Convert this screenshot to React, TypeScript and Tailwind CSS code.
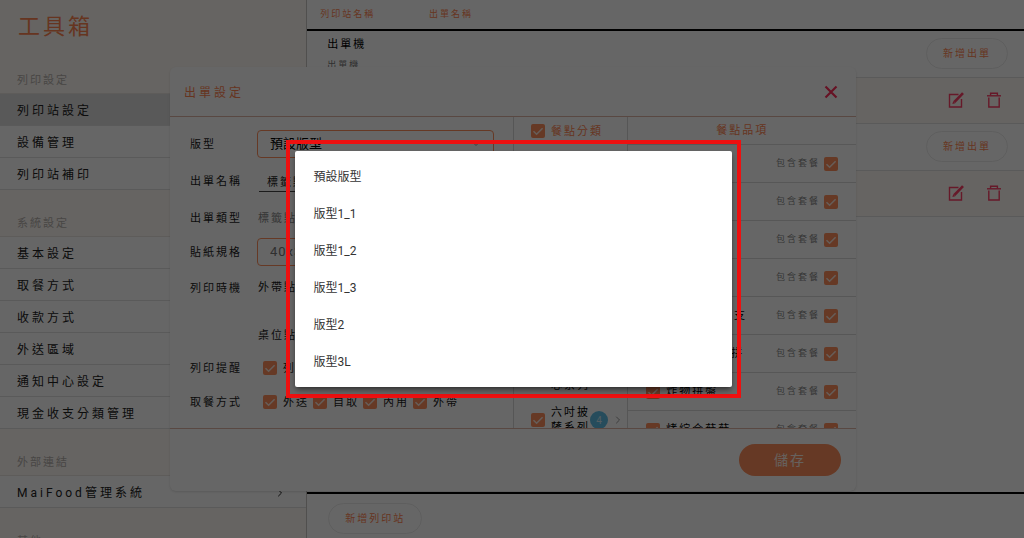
import { useState } from 'react';
import type { ReactNode } from 'react';
import { ChevronDown, ChevronRight } from 'lucide-react';

type NavGroup = { title: string; items: string[]; external?: boolean };

const navGroups: NavGroup[] = [
  { title: '列印設定', items: ['列印站設定', '設備管理', '列印站補印'] },
  { title: '系統設定', items: ['基本設定', '取餐方式', '收款方式', '外送區域', '通知中心設定', '現金收支分類管理'] },
  { title: '外部連結', items: ['MaiFood管理系統'], external: true },
  { title: '其他', items: [] },
];

const stations = [
  { name: '出單機', device: '出單機', ticket: '出單機' },
  { name: '標籤機', device: '標籤機', ticket: '標籤點單機' },
];

const layouts = ['預設版型', '版型1_1', '版型1_2', '版型1_3', '版型2', '版型3L'];

const categories = ['主餐系列', '套餐系列', '飲料系列', '湯品系列', '甜點系列', '炸物點心系列', '六吋披薩系列'];

const dishes = ['美式薯條', '黃金雞塊', '洋蔥圈', '起司條', '美式雞翅x1支', '經典炸物雙拼', '炸物拼盤', '烤綜合菇菇'];

function Checkbox({ label }: { label?: string }) {
  return (
    <span className="relative block size-3.5 shrink-0">
      <input type="checkbox" defaultChecked aria-label={label} className="block size-3.5 appearance-none rounded-xs bg-[#ff8f5c]" />
      <svg viewBox="0 0 14 14" className="pointer-events-none absolute inset-0 size-3.5" fill="none" stroke="#ffe9dc" strokeWidth="1.6">
        <path d="M2.5 7.2 5.6 10.2 11.6 4.2" />
      </svg>
    </span>
  );
}

function EditIcon() {
  return (
    <svg viewBox="0 0 16 16" className="size-4" fill="none" stroke="currentColor">
      <path d="M10.5 2.5H1.5V15H13.5V7" strokeWidth="1.4" />
      <path d="M6.4 10 15 1.2" strokeWidth="2.6" />
      <path d="M4.4 12 5.2 9 7.4 11.2Z" fill="currentColor" stroke="none" />
    </svg>
  );
}

function TrashIcon() {
  return (
    <svg viewBox="0 0 16 16" className="size-4" fill="none" stroke="currentColor" strokeWidth="1.4">
      <path d="M1 3.8H15" />
      <path d="M4.6 3.6V1.2H11.4V3.6" />
      <path d="M2.8 5.6V15H13.2V5.6" />
    </svg>
  );
}

function Sidebar() {
  return (
    <aside className="w-[30%] shrink-0 overflow-hidden border-r border-[#c9c5c2] bg-[#fffaf5]">
      <h1 className="flex h-[47px] items-center pl-[18px] pt-1.5 text-[22px] tracking-[3px] text-[#ff8552]">工具箱</h1>
      {navGroups.map((group, groupIndex) => (
        <nav key={group.title} aria-label={group.title}>
          <h2 className="flex h-[47px] items-end border-b border-[#ece7e2] pb-1 pl-[17px] text-[11px] leading-4 tracking-[2px] text-[#b5b0ac]">
            {group.title}
          </h2>
          {group.items.map((item, i) => (
            <a
              key={item}
              href="#"
              className={`flex h-8 items-center justify-between border-b border-[#e2e2e2] pl-[17px] pr-5 pt-0.5 text-xs tracking-[3px] text-[#222] ${
                groupIndex === 0 && i === 0 ? 'bg-[#dedede]' : 'bg-white'
              }`}
            >
              {item}
              {group.external && <ChevronRight className="size-3" strokeWidth={2} />}
            </a>
          ))}
        </nav>
      ))}
    </aside>
  );
}

function PillButton({ children }: { children: ReactNode }) {
  return (
    <button type="button" className="h-[31px] rounded-full border border-[#ececec] px-4 text-[10px] tracking-[2px] text-[#ff8552]">
      {children}
    </button>
  );
}

function Stations() {
  return (
    <main className="flex min-w-0 flex-1 flex-col bg-white">
      <div className="min-h-0 flex-1 overflow-hidden">
        <table className="w-full border-collapse text-left tracking-[2px]">
          <thead>
            <tr className="h-[30px] border-b-2 border-black text-[9px] text-[#ff8552]">
              <th className="w-[17%] pl-[13px] font-normal">列印站名稱</th>
              <th className="font-normal">出單名稱</th>
              <th aria-label="操作" />
            </tr>
          </thead>
          {stations.map((station) => (
            <tbody key={station.name}>
              <tr className="h-[47px] border-b border-[#e2e2e2]">
                <td className="pl-5 pt-0.5 text-[11px] leading-5 text-black">
                  {station.name}
                  <div className="text-[9px] text-[#777]">{station.device}</div>
                </td>
                <td />
                <td className="pr-4 text-right">
                  <PillButton>新增出單</PillButton>
                </td>
              </tr>
              <tr className="h-[46px] border-b border-[#e2e2e2] bg-[#fffaf5]">
                <td />
                <td className="text-[11px]">{station.ticket}</td>
                <td className="pr-[22px]">
                  <div className="flex justify-end gap-[22px] text-[#ff3f66]">
                    <button type="button" aria-label="編輯"><EditIcon /></button>
                    <button type="button" aria-label="刪除"><TrashIcon /></button>
                  </div>
                </td>
              </tr>
            </tbody>
          ))}
        </table>
      </div>
      <footer className="flex h-[46px] items-center border-t-2 border-black px-[21px] pt-1">
        <PillButton>新增列印站</PillButton>
      </footer>
    </main>
  );
}

function Field({ label, htmlFor, height, children }: { label: string; htmlFor?: string; height: string; children: ReactNode }) {
  return (
    <div className={`flex items-center ${height}`}>
      <label htmlFor={htmlFor} className="w-[67px] shrink-0 pt-0.5">{label}</label>
      <div className="min-w-0 flex-1">{children}</div>
    </div>
  );
}

function Checks({ names }: { names: string[] }) {
  return (
    <div className="flex gap-1 pl-1.5">
      {names.map((name) => (
        <label key={name} className="flex items-center gap-1.5 whitespace-nowrap">
          <Checkbox />
          <span className="pt-0.5">{name}</span>
        </label>
      ))}
    </div>
  );
}

function TicketForm({ layout, onLayout }: { layout: string; onLayout: (value: string) => void }) {
  return (
    <form className="overflow-hidden pl-5 pr-[19px] pt-[13px] text-[11px] tracking-[2px] text-[#1c1c1c]">
      <Field label="版型" htmlFor="layout" height="h-7">
        <div className="relative">
          <select
            id="layout"
            value={layout}
            onChange={(e) => onLayout(e.target.value)}
            className="block h-7 w-full appearance-none rounded-sm border border-[#ff8f5c] pl-3 text-[13px] tracking-normal text-black"
          >
            {layouts.map((name) => (
              <option key={name}>{name}</option>
            ))}
          </select>
          <ChevronDown className="pointer-events-none absolute right-3 top-2 size-3 text-[#999]" />
        </div>
      </Field>
      <Field label="出單名稱" htmlFor="ticket-name" height="h-[46px]">
        <input id="ticket-name" defaultValue="標籤點單機" className="ml-0.5 h-[22px] w-56 border-b border-[#444] pl-2" />
      </Field>
      <Field label="出單類型" height="h-7">
        <div className="pl-px pt-0.5 text-[#888]">標籤點單機</div>
      </Field>
      <Field label="貼紙規格" htmlFor="sticker" height="h-10">
        <select id="sticker" className="block h-7 w-full appearance-none rounded-sm border border-[#ff8f5c] pl-3 text-[13px] tracking-[1px] text-[#777]">
          <option>40x30mm</option>
        </select>
      </Field>
      <Field label="列印時機" height="h-8">
        <div className="pl-px">外帶點餐後列印</div>
      </Field>
      <Field label="" height="h-[47px]">
        <div className="pl-px pt-[18px]">桌位點餐後列印</div>
      </Field>
      <Field label="列印提醒" height="h-[34px]">
        <Checks names={['列印時提醒']} />
      </Field>
      <Field label="取餐方式" height="h-[34px]">
        <Checks names={['外送', '自取', '內用', '外帶']} />
      </Field>
      <Field label="" height="h-8">
        <Checks names={['全選']} />
      </Field>
    </form>
  );
}

function CategoryColumn() {
  return (
    <section className="overflow-hidden border-l border-[#d8d8d8] text-[11px] tracking-[2px]">
      <label className="flex h-7 items-center gap-1.5 pl-[17px] text-[#ff8552]">
        <Checkbox />
        <span className="pt-0.5">餐點分類</span>
      </label>
      {categories.map((name) => (
        <div key={name} className="flex h-[42px] items-center pl-[17px] pr-1 pt-1">
          <Checkbox label={name} />
          <span className="ml-1.5 w-[39px] shrink-0 leading-[15px] text-black">{name}</span>
          <span className="flex size-[18px] shrink-0 items-center justify-center rounded-full bg-[#5fbfe6] text-[10px] tracking-normal text-[#cfe9f5]">4</span>
          <ChevronRight className="ml-1 size-3 shrink-0 text-[#999]" />
        </div>
      ))}
    </section>
  );
}

function DishColumn() {
  return (
    <section className="overflow-hidden border-l border-[#d8d8d8] text-[11px] tracking-[2px]">
      <h3 className="flex h-7 items-center justify-center border-b border-[#dcdcdc] pt-0.5 text-[#ff8552]">餐點品項</h3>
      {dishes.map((name) => (
        <div key={name} className="flex h-[38px] items-center justify-between border-b border-[#dadada] pl-[18px] pr-[18px]">
          <label className="flex items-center gap-1.5 text-black">
            <Checkbox />
            <span className="pt-0.5">{name}</span>
          </label>
          <label className="flex items-center gap-1 text-[9px] text-[#888]">
            包含套餐
            <Checkbox />
          </label>
        </div>
      ))}
    </section>
  );
}

function TicketDialog({ layout, onLayout }: { layout: string; onLayout: (value: string) => void }) {
  return (
    <div className="absolute inset-0 flex justify-center pb-[47px] pt-[67px]">
      <div role="dialog" aria-label="出單設定" className="ml-0.5 flex h-full w-[67%] flex-col overflow-hidden rounded-md bg-white shadow-sm">
        <header className="flex h-[50px] shrink-0 items-center justify-between border-b border-[#dfb5a5] pl-[14px] pr-[18px]">
          <h2 className="pt-0.5 text-xs tracking-[3px] text-[#ff8552]">出單設定</h2>
          <button type="button" aria-label="關閉" className="text-[#ff2f5a]">
            <svg viewBox="0 0 14 14" className="size-3.5" fill="none" stroke="currentColor" strokeWidth="2.2">
              <path d="M1.5 1.5 12.5 12.5M12.5 1.5 1.5 12.5" />
            </svg>
          </button>
        </header>
        <div className="grid min-h-0 flex-1 grid-cols-[3fr_1fr_2fr] grid-rows-1">
          <TicketForm layout={layout} onLayout={onLayout} />
          <CategoryColumn />
          <DishColumn />
        </div>
        <footer className="flex h-[63px] shrink-0 items-center justify-end border-t border-[#dfb5a5] pr-[15px]">
          <button type="button" className="h-8 rounded-full bg-[#ff8f5c] px-[35px] text-sm tracking-[2px] text-[#fff3ec]">儲存</button>
        </footer>
      </div>
    </div>
  );
}

function LayoutMenu({ layout, onSelect }: { layout: string; onSelect: (value: string) => void }) {
  return (
    <div className="absolute inset-0 flex items-start justify-center pt-[140px]">
      <div className="ml-0.5 w-[455px] border-4 border-[#ee1010] px-[5px] py-[7px]">
        <ul role="listbox" aria-label="版型" className="rounded-xs bg-white py-[7px] shadow-md shadow-black/40">
          {layouts.map((name) => (
            <li key={name} role="option" aria-selected={name === layout}>
              <button
                type="button"
                onClick={() => onSelect(name)}
                className="flex h-[37px] w-full items-center pl-[19px] text-xs text-[#333]"
              >
                {name}
              </button>
            </li>
          ))}
        </ul>
      </div>
    </div>
  );
}

export default function App() {
  const [layout, setLayout] = useState('預設版型');

  return (
    <div className="relative flex h-screen overflow-hidden bg-white font-[Roboto,'Noto_Sans_CJK_TC',sans-serif]">
      <Sidebar />
      <Stations />
      <TicketDialog layout={layout} onLayout={setLayout} />
      <div className="absolute inset-0 bg-black/60" />
      <LayoutMenu layout={layout} onSelect={setLayout} />
    </div>
  );
}
